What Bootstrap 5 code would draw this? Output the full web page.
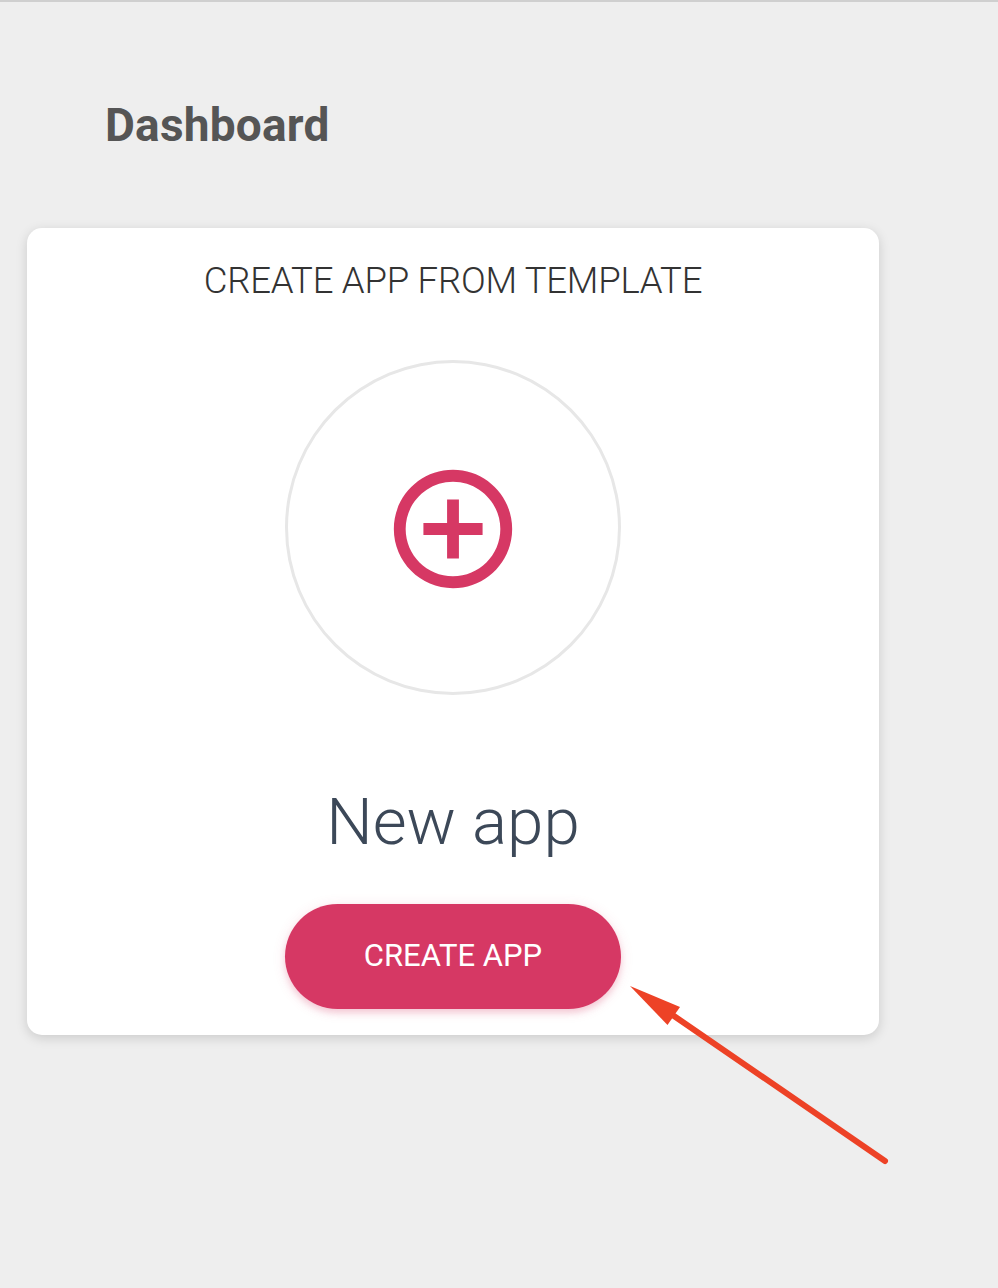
<!DOCTYPE html>
<html lang="en"><head><meta charset="utf-8"><title>Dashboard</title>
<meta name="viewport" content="width=device-width, initial-scale=1">
<link rel="stylesheet" href="https://cdn.jsdelivr.net/npm/bootstrap@5.3.0/dist/css/bootstrap.min.css">
<style>
body{background:#eee;font-family:Roboto,sans-serif;min-height:1288px;border-top:2px solid #cfcfcf}
.page-title{font-size:46px;letter-spacing:.2px;font-weight:700;line-height:54px;color:#555;padding:96px 0 0 105px;margin:0 0 76px}
.app-card{width:852px;height:807px;margin-left:27px;border:0;border-radius:15px;box-shadow:0 3px 12px rgba(0,0,0,.15)}
.template-title{font-size:36.5px;letter-spacing:-.22px;font-weight:300;line-height:44px;color:#333;margin:31px 0 57px}
.icon-ring{width:336px;height:335px;border:3px solid #e7e7e7;padding-top:2px}
.app-name{font-size:65.5px;font-weight:300;line-height:80px;color:#3c4858;margin:87px 0 42px}
.btn-create{width:336px;height:105px;border-radius:53px;background:#d63864;color:#fff;font-size:31px;font-weight:400;border:0;padding-bottom:6px;box-shadow:0 4px 6px rgba(214,56,100,.2),0 2px 14px rgba(214,56,100,.12)}
.pointer{left:620px;top:974px}
</style></head>
<body class="position-relative">
<main>
<h1 class="page-title">Dashboard</h1>
<section class="card app-card align-items-center">
<h2 class="template-title">CREATE APP FROM TEMPLATE</h2>
<div class="icon-ring rounded-circle d-flex align-items-center justify-content-center flex-shrink-0">
<svg width="142" height="142" viewBox="0 0 24 24" fill="#d63864"><path d="M13 7h-2v4H7v2h4v4h2v-4h4v-2h-4V7zm-1-5C6.480 2 2 6.480 2 12s4.480 10 10 10 10-4.480 10-10S17.520 2 12 2zm0 18c-4.410 0-8-3.590-8-8s3.590-8 8-8 8 3.590 8 8-3.590 8-8 8z"/></svg>
</div>
<h3 class="app-name">New app</h3>
<button type="button" class="btn btn-create">CREATE APP</button>
</section>
</main>
<svg class="pointer position-absolute" width="280" height="200" viewBox="620 976 280 200"><path d="M674 1016L885 1161" stroke="#ed4226" stroke-width="6" stroke-linecap="round"/><path d="M630 986L680 1007L667.500 1025Z" fill="#ed4226"/></svg>
<script src="https://cdn.jsdelivr.net/npm/bootstrap@5.3.0/dist/js/bootstrap.bundle.min.js"></script>
</body></html>
